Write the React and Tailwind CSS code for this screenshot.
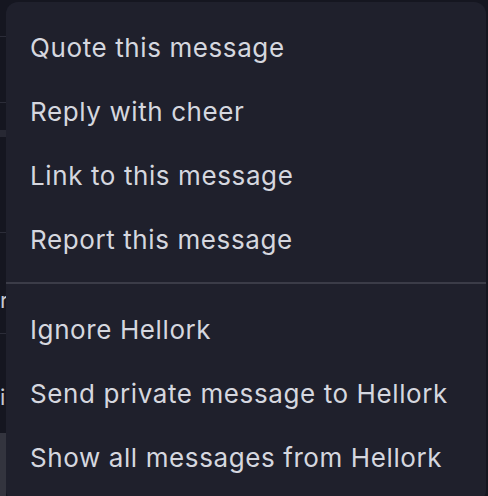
const items1 = ['Quote this message', 'Reply with cheer', 'Link to this message', 'Report this message'];
const items2 = ['Ignore Hellork', 'Send private message to Hellork', 'Show all messages from Hellork'];

const MenuItem = ({ label }) => (
  <div className="h-16 shrink-0 flex items-center px-6 text-[26px] text-[#d5d7df] tracking-[0.6px] whitespace-nowrap">
    {label}
  </div>
);

// slice of the chat list that peeks out behind the menu
const Backdrop = () => (
  <div className="w-[6px] shrink-0 h-full flex flex-col overflow-hidden text-[22px] leading-none text-[#c8cad2]">
    <div className="h-[36px] shrink-0" />
    <div className="h-px shrink-0 bg-[#2b2c38]" />
    <div className="h-[65px] shrink-0" />
    <div className="h-px shrink-0 bg-[#2b2c38]" />
    <div className="h-[27px] shrink-0" />
    <div className="h-[7px] shrink-0 bg-[#272833]" />
    <div className="h-[95px] shrink-0" />
    <div className="h-px shrink-0 bg-[#2b2c38]" />
    <div className="h-[100px] shrink-0 flex items-center pt-[34px]">r</div>
    <div className="h-px shrink-0 bg-[#2b2c38]" />
    <div className="h-[99px] shrink-0 flex items-center pt-[26px]">i</div>
    <div className="flex-1 bg-[#33343e]" />
  </div>
);

export default function App() {
  return (
    <div
      className="w-[488px] h-[496px] overflow-hidden bg-[#151620] flex"
      style={{ fontFamily: 'Inter, "Noto Sans", sans-serif' }}
    >
      <Backdrop />
      <div className="mt-[2px] w-[480px] h-[500px] shrink-0 rounded-[12px] bg-[#1f202c] pt-[13px] flex flex-col">
        {items1.map((t) => (
          <MenuItem key={t} label={t} />
        ))}
        <div className="h-[2px] shrink-0 bg-[#3b3c48] mt-[11px] mb-[13px]" />
        {items2.map((t) => (
          <MenuItem key={t} label={t} />
        ))}
      </div>
    </div>
  );
}
